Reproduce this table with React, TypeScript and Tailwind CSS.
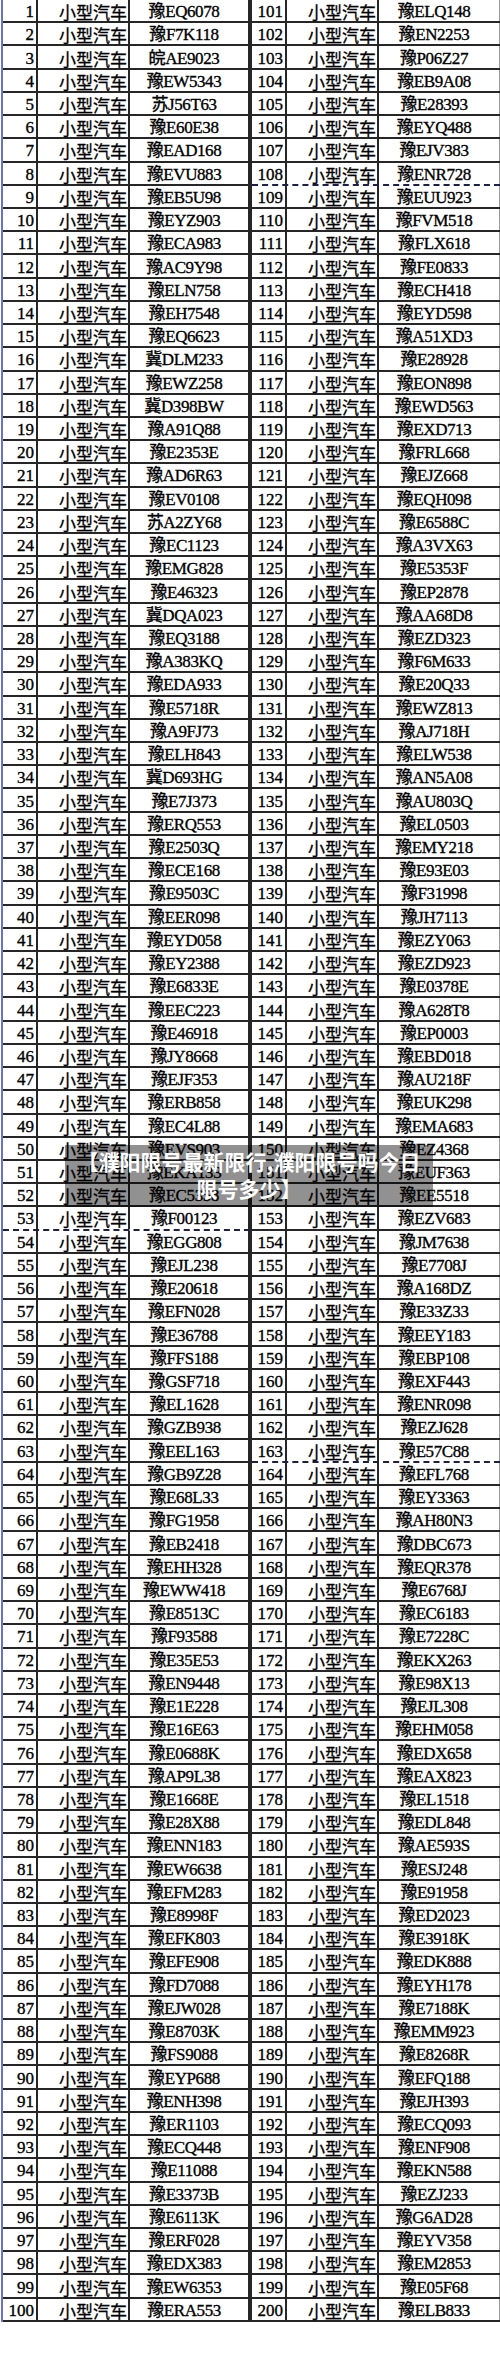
import React from "react";

const leftPlates: string[] = [
  "豫EQ6078", "豫F7K118", "皖AE9023", "豫EW5343", "苏J56T63", "豫E60E38", "豫EAD168", "豫EVU883", "豫EB5U98", "豫EYZ903",
  "豫ECA983", "豫AC9Y98", "豫ELN758", "豫EH7548", "豫EQ6623", "冀DLM233", "豫EWZ258", "冀D398BW", "豫A91Q88", "豫E2353E",
  "豫AD6R63", "豫EV0108", "苏A2ZY68", "豫EC1123", "豫EMG828", "豫E46323", "冀DQA023", "豫EQ3188", "豫A383KQ", "豫EDA933",
  "豫E5718R", "豫A9FJ73", "豫ELH843", "冀D693HG", "豫E7J373", "豫ERQ553", "豫E2503Q", "豫ECE168", "豫E9503C", "豫EER098",
  "豫EYD058", "豫EY2388", "豫E6833E", "豫EEC223", "豫E46918", "豫JY8668", "豫EJF353", "豫ERB858", "豫EC4L88", "豫EVS903",
  "豫EKA133", "豫EC5358", "豫F00123", "豫EGG808", "豫EJL238", "豫E20618", "豫EFN028", "豫E36788", "豫FFS188", "豫GSF718",
  "豫EL1628", "豫GZB938", "豫EEL163", "豫GB9Z28", "豫E68L33", "豫FG1958", "豫EB2418", "豫EHH328", "豫EWW418", "豫E8513C",
  "豫F93588", "豫E35E53", "豫EN9448", "豫E1E228", "豫E16E63", "豫E0688K", "豫AP9L38", "豫E1668E", "豫E28X88", "豫ENN183",
  "豫EW6638", "豫EFM283", "豫E8998F", "豫EFK803", "豫EFE908", "豫FD7088", "豫EJW028", "豫E8703K", "豫FS9088", "豫EYP688",
  "豫ENH398", "豫ER1103", "豫ECQ448", "豫E11088", "豫E3373B", "豫E6113K", "豫ERF028", "豫EDX383", "豫EW6353", "豫ERA553",
];

const rightPlates: string[] = [
  "豫ELQ148", "豫EN2253", "豫P06Z27", "豫EB9A08", "豫E28393", "豫EYQ488", "豫EJV383", "豫ENR728", "豫EUU923", "豫FVM518",
  "豫FLX618", "豫FE0833", "豫ECH418", "豫EYD598", "豫A51XD3", "豫E28928", "豫EON898", "豫EWD563", "豫EXD713", "豫FRL668",
  "豫EJZ668", "豫EQH098", "豫E6588C", "豫A3VX63", "豫E5353F", "豫EP2878", "豫AA68D8", "豫EZD323", "豫F6M633", "豫E20Q33",
  "豫EWZ813", "豫AJ718H", "豫ELW538", "豫AN5A08", "豫AU803Q", "豫EL0503", "豫EMY218", "豫E93E03", "豫F31998", "豫JH7113",
  "豫EZY063", "豫EZD923", "豫E0378E", "豫A628T8", "豫EP0003", "豫EBD018", "豫AU218F", "豫EUK298", "豫EMA683", "豫EZ4368",
  "豫EUF363", "豫EE5518", "豫EZV683", "豫JM7638", "豫E7708J", "豫A168DZ", "豫E33Z33", "豫EEY183", "豫EBP108", "豫EXF443",
  "豫ENR098", "豫EZJ628", "豫E57C88", "豫EFL768", "豫EY3363", "豫AH80N3", "豫DBC673", "豫EQR378", "豫E6768J", "豫EC6183",
  "豫E7228C", "豫EKX263", "豫E98X13", "豫EJL308", "豫EHM058", "豫EDX658", "豫EAX823", "豫EL1518", "豫EDL848", "豫AE593S",
  "豫ESJ248", "豫E91958", "豫ED2023", "豫E3918K", "豫EDK888", "豫EYH178", "豫E7188K", "豫EMM923", "豫E8268R", "豫EFQ188",
  "豫EJH393", "豫ECQ093", "豫ENF908", "豫EKN588", "豫EZJ233", "豫G6AD28", "豫EYV358", "豫EM2853", "豫E05F68", "豫ELB833",
];

function Row({ n, plate, dashed, right }: { n: number; plate: string; dashed: boolean; right: boolean }) {
  return (
    <div
      className={`grid h-[23.22px] border-b-2 ${dashed ? "border-dashed border-[#1c1f4a]" : "border-solid border-[#262626]"} ${
        right ? "grid-cols-[35px_92px_121px]" : "grid-cols-[35px_92px_120px]"
      }`}
    >
      <div className="flex items-center justify-end border-r-2 border-[#262626] pr-[2px] pt-[2px] font-['Liberation_Serif',serif] text-[17px] leading-none text-black [-webkit-text-stroke:0.35px_black]">
        {n}
      </div>
      <div className="flex items-center justify-end border-r-2 border-[#262626] pr-[1px] pt-[2px] font-['Noto_Sans_CJK_SC',sans-serif] text-[17px] leading-none text-black [-webkit-text-stroke:0.3px_black]">
        小型汽车
      </div>
      <div
        className={`flex items-center justify-center pt-[2px] font-['Liberation_Serif','Noto_Sans_CJK_SC',serif] text-[17px] leading-none tracking-[-0.4px] text-black [-webkit-text-stroke:0.35px_black] ${
          right ? "pr-[10px] border-r border-[#9a9a9a]" : "pr-[10px] border-r-2 border-[#262626]"
        }`}
      >
        {plate}
      </div>
    </div>
  );
}

export default function App() {
  return (
    <div className="relative h-[2354px] w-[500px] overflow-hidden bg-white">
      <div className="flex">
        <div className="ml-[1px] w-[249px] border-l-2 border-[#6a72c8]">
          {leftPlates.map((p, i) => (
            <Row key={i} n={i + 1} plate={p} dashed={i === 52} right={false} />
          ))}
        </div>
        <div className="w-[250px] border-l-2 border-[#262626]">
          {rightPlates.map((p, i) => (
            <Row key={i} n={i + 101} plate={p} dashed={i === 7 || i === 62} right={true} />
          ))}
        </div>
      </div>

      <div className="absolute left-[65px] top-[1145px] flex h-[62px] w-[368px] flex-col items-center justify-center bg-[rgba(0,0,0,0.43)] pb-[3px] font-['Noto_Sans_CJK_SC',sans-serif] text-[21px] font-bold leading-[27px] text-white">
        <span className="whitespace-nowrap">【濮阳限号最新限行,濮阳限号吗今日</span>
        <span className="whitespace-nowrap">限号多少】</span>
      </div>
    </div>
  );
}
